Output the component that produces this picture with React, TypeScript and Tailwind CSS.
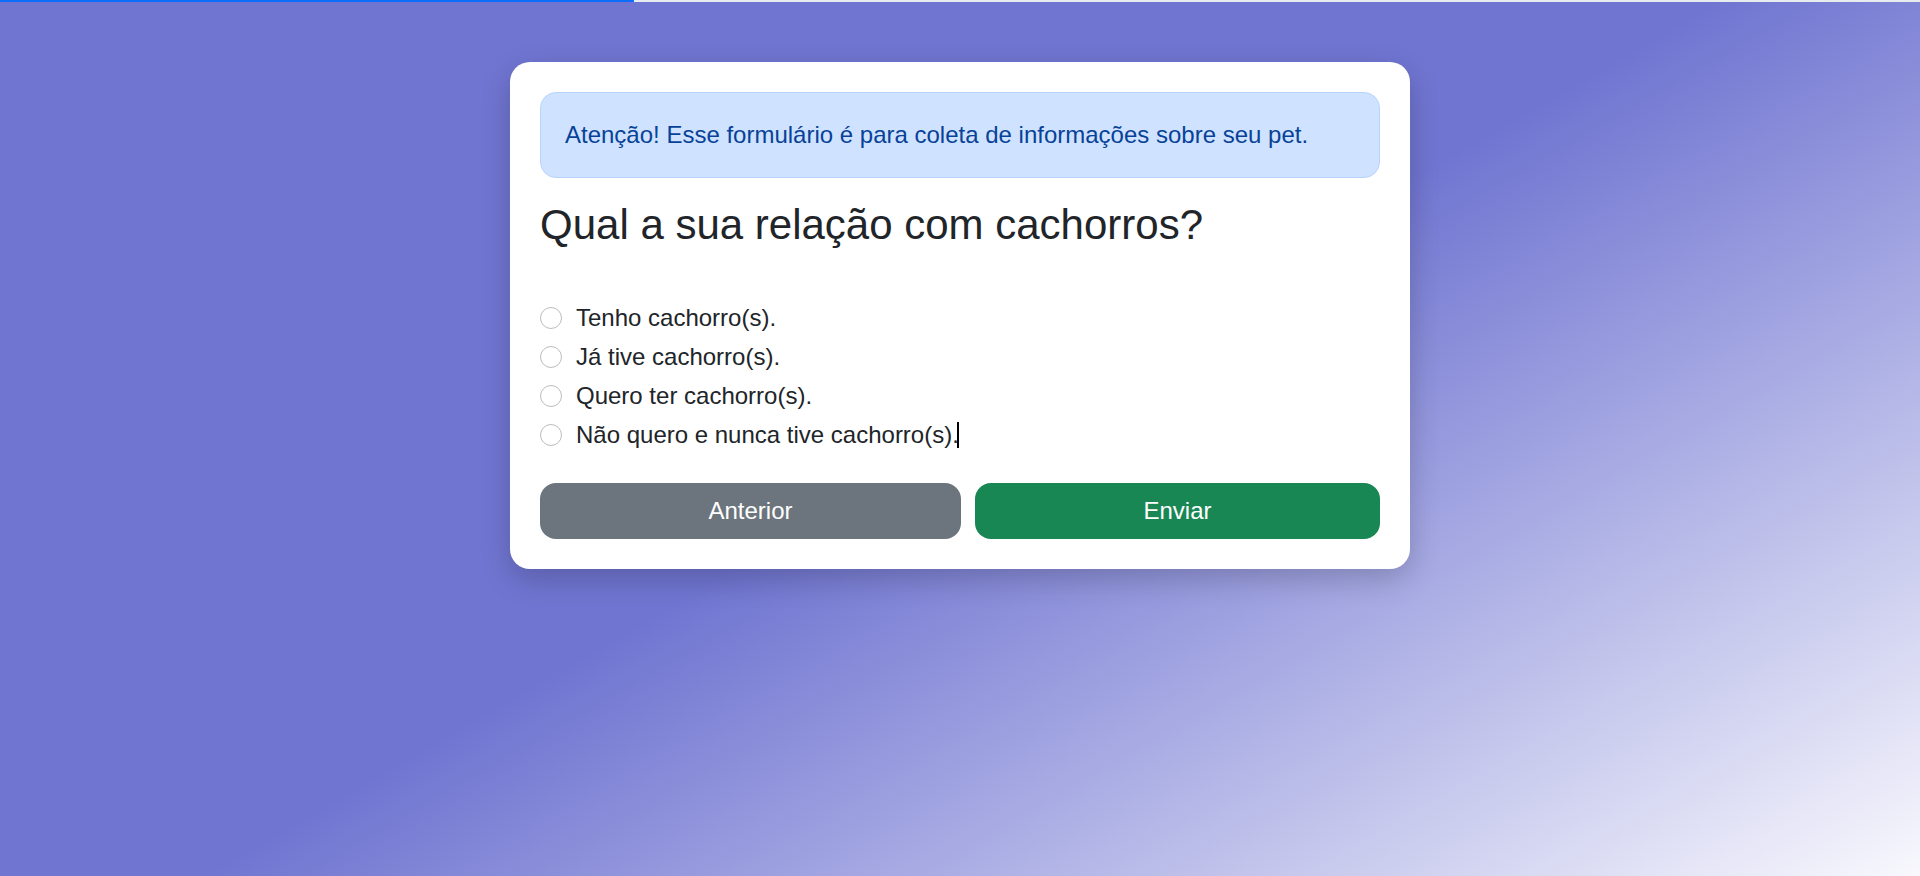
import React, { useState } from "react";

const options = [
  "Tenho cachorro(s).",
  "Já tive cachorro(s).",
  "Quero ter cachorro(s).",
  "Não quero e nunca tive cachorro(s).",
];

// Formulário de pergunta sobre cachorros
const App = () => {
  const [selected, setSelected] = useState<number | null>(null);
  const progress = 33;

  return (
    <div
      className="min-h-screen w-full bg-[linear-gradient(150deg,#7075d1_50%,#f8f8fd_100%)] text-[#212529]"
      style={{ fontFamily: '"Liberation Sans", Arial, sans-serif' }}
    >
      {/* Barra de progresso */}
      <div className="h-[2px] w-full bg-[#e9ecef]">
        <div className="h-full bg-[#0d6efd]" style={{ width: `${progress}%` }} />
      </div>

      <div className="flex justify-center pt-[60px]">
        <div className="w-[900px] rounded-[20px] bg-white p-[30px] shadow-[0_10px_30px_rgba(0,0,0,0.2)]">
          <div className="rounded-[16px] border border-[#b6d4fe] bg-[#cfe2ff] px-[24px] py-[27px] text-[24px] leading-[30px] text-[#084298]">
            Atenção! Esse formulário é para coleta de informações sobre seu pet.
          </div>

          <h1 className="mt-[23px] text-[42px] leading-[48px] font-normal">
            Qual a sua relação com cachorros?
          </h1>

          <div className="mt-[54px] flex flex-col gap-[9px]">
            {options.map((opt, i) => (
              <label
                key={opt}
                className="flex h-[30px] cursor-pointer items-center gap-[14px] text-[24px] leading-[30px]"
                onClick={() => setSelected(i)}
              >
                <span
                  className={
                    selected === i
                      ? "h-[22px] w-[22px] shrink-0 rounded-full border-[6px] border-[#0d6efd] bg-white"
                      : "h-[22px] w-[22px] shrink-0 rounded-full border border-[#bdbdbd] bg-white"
                  }
                />
                <span className="flex items-center">
                  {opt}
                  {i === options.length - 1 && (
                    <span className="-ml-[2px] inline-block h-[26px] w-[2px] bg-black" />
                  )}
                </span>
              </label>
            ))}
          </div>

          <div className="mt-[33px] flex gap-[14px]">
            <button className="h-[56px] flex-auto rounded-[16px] bg-[#6c757d] px-6 text-[24px] text-white">
              Anterior
            </button>
            <button className="h-[56px] flex-auto rounded-[16px] bg-[#198754] px-6 text-[24px] text-white">
              Enviar
            </button>
          </div>
        </div>
      </div>
    </div>
  );
};

export default App;
